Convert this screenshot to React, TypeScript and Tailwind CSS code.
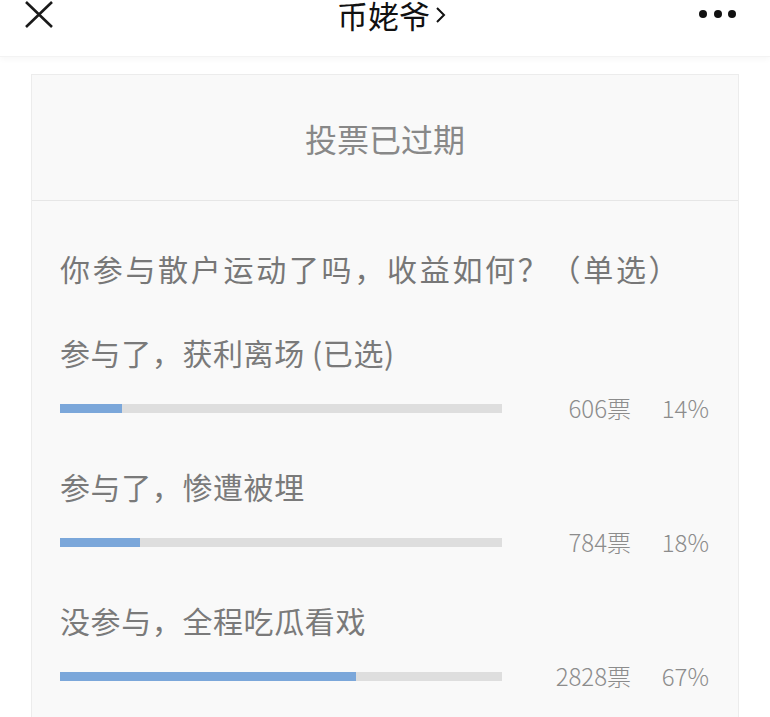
import React from 'react';

const options = [
  { label: '参与了，获利离场 (已选)', votes: 606, pct: 14 },
  { label: '参与了，惨遭被埋', votes: 784, pct: 18 },
  { label: '没参与，全程吃瓜看戏', votes: 2828, pct: 67 },
];

const font = { fontFamily: '"Noto Sans CJK SC", "Noto Sans", sans-serif' };

export default function App() {
  return (
    <div className="w-[770px] h-[717px] overflow-hidden bg-white" style={font}>
      {/* Top bar */}
      <div className="relative h-[57px] bg-white shadow-[0_2px_6px_rgba(0,0,0,0.04)] border-b border-[#f3f3f3]">
        <svg className="absolute left-[24px] top-[0px]" width="30" height="30" viewBox="0 0 30 30">
          <path d="M2 2 L28 27 M28 2 L2 27" stroke="#1a1a1a" strokeWidth="2.6" fill="none" />
        </svg>
        <div className="flex items-center justify-center h-[30px]">
          <span className="text-[31px] leading-[30px] text-[#111] ml-[14px]">币姥爷</span>
          <svg className="ml-[5px]" width="12" height="20" viewBox="0 0 12 20">
            <path d="M2 3 L9 10 L2 17" stroke="#111" strokeWidth="2" fill="none" />
          </svg>
        </div>
        <div className="absolute left-[699px] top-[10px] flex gap-[6.5px]">
          <span className="w-[8px] h-[8px] rounded-full bg-[#111]" />
          <span className="w-[8px] h-[8px] rounded-full bg-[#111]" />
          <span className="w-[8px] h-[8px] rounded-full bg-[#111]" />
        </div>
      </div>

      {/* Poll card */}
      <div className="mx-[31px] mt-[17px] border border-[#ececec] bg-[#f9f9f9] pb-[60px]">
        <div className="h-[126px] flex items-center justify-center border-b border-[#e6e6e6]">
          <span className="text-[32px] text-[#888]">投票已过期</span>
        </div>
        <div className="pl-[28px] pr-[29px] pt-[47px]">
          <div className="text-[30px] leading-[40px] text-[#777] tracking-[2.7px] whitespace-nowrap">你参与散户运动了吗，收益如何？（单选）</div>
          <div className="mt-[44px] flex flex-col gap-[43px]">
            {options.map((o) => (
              <div key={o.label}>
                <div className="text-[30px] leading-[40px] text-[#7a7a7a] tracking-[0.6px]">{o.label}</div>
                <div className="mt-[21px] h-[30px] flex items-center">
                  <div className="w-[442px] h-[9px] bg-[#dedede]">
                    <div className="h-full bg-[#7ba7da]" style={{ width: `${o.pct}%` }} />
                  </div>
                  <div className="w-[129px] text-right text-[24px] text-[#8c8c8c] font-light">{o.votes}票</div>
                  <div className="w-[78px] text-right text-[24px] text-[#8c8c8c] font-light">{o.pct}%</div>
                </div>
              </div>
            ))}
          </div>
        </div>
      </div>
    </div>
  );
}
